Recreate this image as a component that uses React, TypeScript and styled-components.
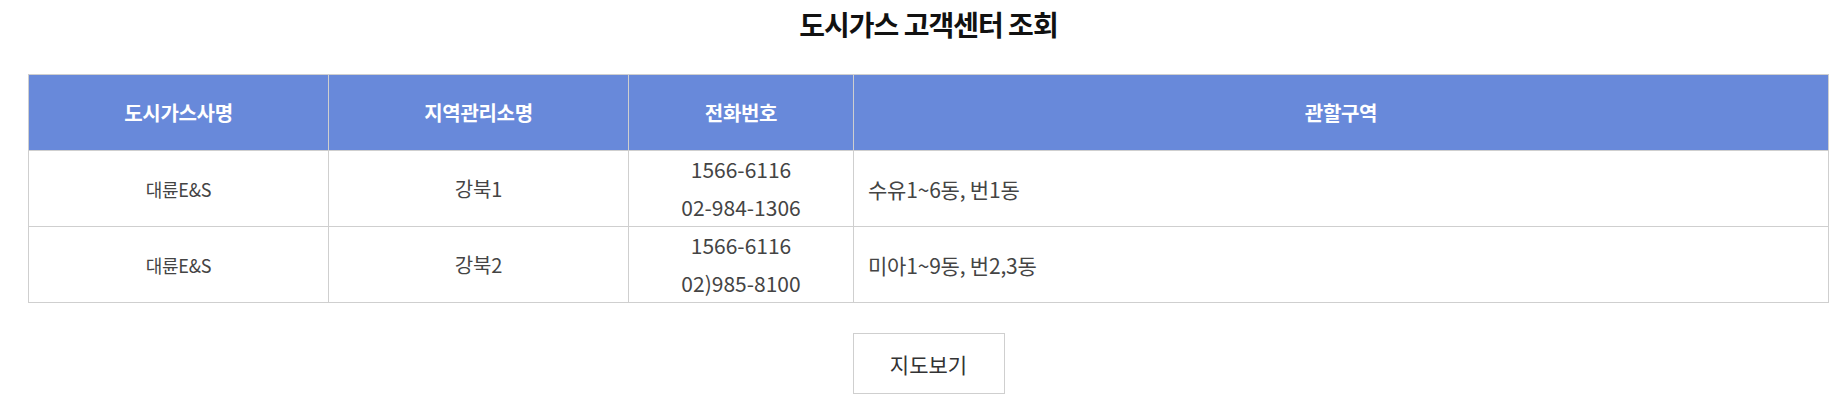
import styled, { createGlobalStyle } from 'styled-components';

interface Center {
    id: number;
    company: string;
    office: string;
    phones: string[];
    area: string;
}

const CENTERS: Center[] = [
    { id: 1, company: '대륜E&S', office: '강북1', phones: ['1566-6116', '02-984-1306'], area: '수유1~6동, 번1동' },
    { id: 2, company: '대륜E&S', office: '강북2', phones: ['1566-6116', '02)985-8100'], area: '미아1~9동, 번2,3동' },
];

const GlobalStyle = createGlobalStyle`
  body {
    margin: 0;
    background: #fff;
    font-family: "Noto Sans CJK KR", "Noto Sans", sans-serif;
  }
`;

const Page = styled.div`
  display: flex;
  flex-direction: column;
  align-items: center;
  width: 1801px;
  margin-left: 28px;
  padding-top: 4px;
`;

const Title = styled.h2`
  margin: 0 0 30px;
  font-size: 28px;
  line-height: 40px;
  font-weight: 700;
  letter-spacing: -1px;
  color: #111;
`;

const Table = styled.table`
  width: 100%;
  border-collapse: collapse;
  table-layout: fixed;
  border: 1px solid #cfcfcf;
`;

const HeadCell = styled.th<{ $width?: number }>`
  width: ${p => (p.$width ? `${p.$width}px` : 'auto')};
  height: 75px;
  padding: 0;
  background: #6889da;
  border: 1px solid #cfcfcf;
  color: #fff;
  font-size: 20px;
  font-weight: 700;
  letter-spacing: -0.3px;
`;

const Cell = styled.td<{ $size: number; $left?: boolean }>`
  height: 75px;
  padding: ${p => (p.$left ? '0 0 0 14px' : '0')};
  border: 1px solid #cfcfcf;
  text-align: ${p => (p.$left ? 'left' : 'center')};
  font-size: ${p => p.$size}px;
  color: #444;
  letter-spacing: -0.2px;
`;

const PhoneLine = styled.div`
  line-height: 37.5px;
  letter-spacing: 0;
`;

const MapButton = styled.button`
  margin-top: 30px;
  width: 152px;
  height: 61px;
  background: #fff;
  border: 1px solid #cfcfcf;
  font-family: "Noto Sans CJK KR", "Noto Sans", sans-serif;
  font-size: 21px;
  color: #333;
  cursor: pointer;
`;

const App: React.FC = () => {
    return (
        <>
            <GlobalStyle />
            <Page>
                <Title>도시가스 고객센터 조회</Title>
                <Table>
                    <thead>
                        <tr>
                            <HeadCell $width={299}>도시가스사명</HeadCell>
                            <HeadCell $width={299}>지역관리소명</HeadCell>
                            <HeadCell $width={224}>전화번호</HeadCell>
                            <HeadCell>관할구역</HeadCell>
                        </tr>
                    </thead>
                    <tbody>
                        {CENTERS.map(c => (
                            <tr key={c.id}>
                                <Cell $size={18}>{c.company}</Cell>
                                <Cell $size={20}>{c.office}</Cell>
                                <Cell $size={21}>
                                    {c.phones.map(p => (
                                        <PhoneLine key={p}>{p}</PhoneLine>
                                    ))}
                                </Cell>
                                <Cell $size={21} $left>{c.area}</Cell>
                            </tr>
                        ))}
                    </tbody>
                </Table>
                <MapButton>지도보기</MapButton>
            </Page>
        </>
    );
};

export default App;
